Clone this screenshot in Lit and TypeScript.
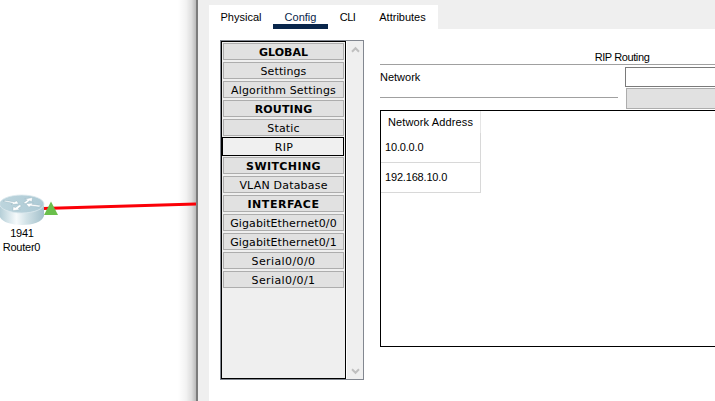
import { LitElement, html, css, svg } from "lit";
import { customElement, property } from "lit/decorators.js";
import { classMap } from "lit/directives/class-map.js";
import { styleMap } from "lit/directives/style-map.js";

type Entry = { label: string; kind?: "head" | "active"; spacing?: number };

const ENTRIES: Entry[] = [
  { label: "GLOBAL", kind: "head" },
  { label: "Settings", spacing: 0.1 },
  { label: "Algorithm Settings", spacing: 0.13 },
  { label: "ROUTING", kind: "head", spacing: 0.15 },
  { label: "Static", spacing: 0.15 },
  { label: "RIP", kind: "active", spacing: 0.4 },
  { label: "SWITCHING", kind: "head", spacing: 0.4 },
  { label: "VLAN Database", spacing: 0.2 },
  { label: "INTERFACE", kind: "head", spacing: 0.55 },
  { label: "GigabitEthernet0/0", spacing: 0.1 },
  { label: "GigabitEthernet0/1", spacing: 0.1 },
  { label: "Serial0/0/0", spacing: 0.4 },
  { label: "Serial0/0/1", spacing: 0.4 },
];

@customElement("router-canvas")
export class RouterCanvas extends LitElement {
  static styles = css`
    :host { position: relative; display: block; width: 196px; height: 401px; background: #fff; overflow: hidden; flex: none; }
    .drawing { position: absolute; left: 0; top: 0; display: block; }
    .caption { position: absolute; left: -29px; top: 226px; width: 101px; text-align: center; line-height: 14px; letter-spacing: -.25px; }
    .model { padding-left: 1px; }
    .shade { position: absolute; right: 0; top: 0; width: 18px; height: 100%;
      background: linear-gradient(90deg, rgba(0,0,0,0), rgba(0,0,0,.05) 45%, rgba(0,0,0,.13) 75%, rgba(0,0,0,.27)); }
  `;
  render() {
    return html`
      <div class="shade"></div>
      <svg class="drawing" width="196" height="401" viewBox="0 0 196 401">
        <defs>
          <linearGradient id="side" x1="0" x2="1">
            <stop offset="0" stop-color="#b3cdd6" /><stop offset=".2" stop-color="#d6e5ea" />
            <stop offset=".38" stop-color="#f6fafb" /><stop offset=".6" stop-color="#d3e3e8" />
            <stop offset="1" stop-color="#a3c0cb" />
          </linearGradient>
          <linearGradient id="top" x1="0" x2="1">
            <stop offset="0" stop-color="#bdd5dd" /><stop offset="1" stop-color="#adcad5" />
          </linearGradient>
        </defs>
        <path d="M43 208.5 L196 203.9" stroke="#fb0007" stroke-width="3" />
        <path d="M-.5 204 V216 C1 222 11 225 22 225 S42 222 44 216 V204 Z" fill="url(#side)" />
        <ellipse cx="21.8" cy="204" rx="22.2" ry="9" fill="url(#top)" stroke="#dce9ed" stroke-width=".8" />
        ${svg`<g fill="#fff" stroke="#88aab7" stroke-width=".35">
          <path d="M3 201.2 L5.5 200.4 L14.5 202 L16.5 200.8 L18.8 203.8 L11 204.6 L12.8 203.3 Z" />
          <path d="M23.3 203 L27.3 200 L24.8 198.9 L32.6 197.6 L31.8 201.7 L29.6 200.8 L25.9 203.7 Z" />
          <path d="M41.3 205.6 L39 207 L30.5 205.9 L29 207.2 L25.8 203.8 L33.4 203 L31.8 204.2 Z" />
          <path d="M21.7 205.8 L18.2 208.6 L20.2 209.6 L12.8 210.7 L13.2 206.7 L15.5 207.5 L19.3 204.8 Z" />
        </g>`}
        <path d="M51 201.4 L58 215 H44 Z" fill="#6abf4b" />
      </svg>
      <div class="caption"><div class="model">1941</div><div>Router0</div></div>
    `;
  }
}

@customElement("config-sidebar")
export class ConfigSidebar extends LitElement {
  static styles = css`
    :host { display: flex; box-sizing: border-box; width: 144px; height: 340px; border: 1px solid #828790; background: #fff; flex: none; }
    .list { box-sizing: border-box; width: 125px; border: 1px solid #000; background: #efefef; display: flex; flex-direction: column; gap: 2px; padding: 1px; }
    .entry { box-sizing: border-box; height: 17px; flex: none; border: 1px solid #adadad; background: #e1e1e1; text-align: center;
      font: 11px/17px "DejaVu Sans", sans-serif; white-space: nowrap; color: #000; }
    .head { font-weight: bold; }
    .active { height: 19px; margin: -1px 0 -1px -1px; padding-left: 2px; line-height: 20px; border-color: #000; background: #f0f0f0; }
    .track { width: 16px; margin-left: 1px; background: #efefef; display: flex; flex-direction: column; justify-content: space-between; align-items: center; padding: 5px 0 4px; box-sizing: border-box; }
    .arrow { display: block; fill: none; stroke: #bfbfbf; stroke-width: 2; }
  `;
  render() {
    return html`
      <div class="list">
        ${ENTRIES.map((e) => html`<div
          class=${classMap({ entry: true, head: e.kind === "head", active: e.kind === "active" })}
          style=${styleMap({ letterSpacing: `${e.spacing ?? 0}px` })}>${e.label}</div>`)}
      </div>
      <div class="track">
        <svg class="arrow" width="9" height="7"><path d="M1 5.7 L4.5 2.2 L8 5.7" /></svg>
        <svg class="arrow" width="9" height="7"><path d="M1 1.3 L4.5 4.8 L8 1.3" /></svg>
      </div>
    `;
  }
}

@customElement("rip-panel")
export class RipPanel extends LitElement {
  @property({ attribute: false }) rows = ["10.0.0.0", "192.168.10.0"];
  static styles = css`
    :host { display: block; width: 484px; flex: none; }
    .title { height: 25px; box-sizing: border-box; padding-top: 10px; line-height: 14px; text-align: center; letter-spacing: -.4px; border-bottom: 1px solid #a0a0a0; }
    .form { display: flex; height: 46px; }
    .left { width: 238px; display: flex; flex-direction: column; justify-content: space-between; height: 33px; }
    .name { padding-top: 5px; line-height: 14px; }
    .rule { height: 1px; background: #a0a0a0; }
    .right { flex: 1; padding: 2px 0 0 7px; }
    .field { height: 20px; box-sizing: border-box; border: 1px solid #7a7a7a; background: #fff; }
    .add { height: 21px; box-sizing: border-box; margin: 1px 0 0 1px; border: 1px solid #adadad; background: #e1e1e1; }
    .table { height: 237px; box-sizing: border-box; border: 1px solid #000; margin-top: -1px; }
    .th, .td { width: 100px; box-sizing: border-box; }
    .th { height: 22px; line-height: 22px; border-right: 1px solid #e5e5e5; padding-left: 7px; letter-spacing: .13px; }
    .td { height: 30px; line-height: 29px; border-right: 1px solid #d8d8d8; border-bottom: 1px solid #d8d8d8; padding-left: 4px; letter-spacing: -.18px; }
  `;
  render() {
    return html`
      <div class="title">RIP Routing</div>
      <div class="form">
        <div class="left"><div class="name">Network</div><div class="rule"></div></div>
        <div class="right"><div class="field"></div><div class="add"></div></div>
      </div>
      <div class="table">
        <div class="th">Network Address</div>
        ${this.rows.map((r) => html`<div class="td">${r}</div>`)}
      </div>
    `;
  }
}

@customElement("app-root")
export class AppRoot extends LitElement {
  static styles = css`
    :host { display: flex; width: 715px; height: 401px; overflow: hidden; background: #fff; color: #000; font: 11px "Liberation Sans", Arial, sans-serif; }
    .window { flex: 1; min-width: 0; box-sizing: border-box; border-left: 2px solid #7b7b7b; background: #efefef; padding: 5px 0 0 11px; display: flex; flex-direction: column; }
    .tabs { width: 229px; height: 24px; background: #fff; display: flex; flex: none; }
    .tab { box-sizing: border-box; height: 24px; text-align: center; line-height: 25px; white-space: nowrap; }
    .physical { width: 64px; }
    .config { width: 55px; border-bottom: 5px solid #09264b; color: #09264b; }
    .cli { width: 39px; letter-spacing: -.6px; }
    .attributes { width: 71px; }
    .page { flex: 1; background: #fff; display: flex; gap: 16px; padding: 11px 0 0 11px; overflow: hidden; }
  `;
  render() {
    return html`
      <router-canvas></router-canvas>
      <div class="window">
        <div class="tabs">
          <div class="tab physical">Physical</div>
          <div class="tab config">Config</div>
          <div class="tab cli">CLI</div>
          <div class="tab attributes">Attributes</div>
        </div>
        <div class="page"><config-sidebar></config-sidebar><rip-panel></rip-panel></div>
      </div>
    `;
  }
}
